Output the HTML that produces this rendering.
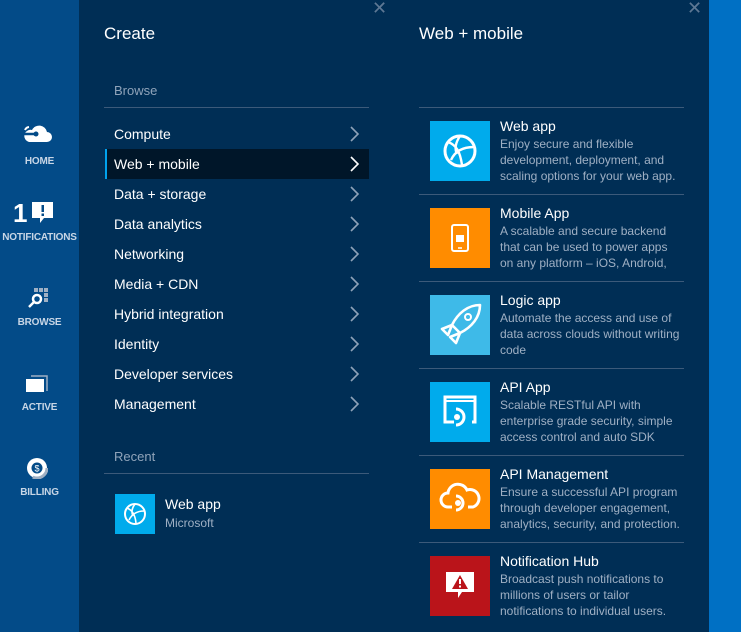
<!DOCTYPE html>
<html><head><meta charset="utf-8"><style>
*{margin:0;padding:0;box-sizing:border-box}
body{width:741px;height:632px;overflow:hidden;background:#002e55;font-family:"Segoe UI","Liberation Sans",sans-serif;position:relative;color:#fff}
.nav{position:absolute;left:0;top:0;width:79px;height:632px;background:#034b88}
.right{position:absolute;left:709px;top:0;width:32px;height:632px;background:#0070c4}
.abs{position:absolute}
.navlbl{position:absolute;width:79px;text-align:center;font-size:10px;color:#c8d6e6;font-weight:bold;letter-spacing:-0.2px}
.h1{font-size:17px;color:#fff}
.sec{font-size:13px;color:#90a4ba}
.sep{position:absolute;height:1px;background:#3c5a7a}
.item{position:absolute;left:105px;width:264px;height:30px;font-size:14px;line-height:30px;padding-left:9px;color:#fff}
.item.sel{background:#001629;border-left:2px solid #00a2ed;padding-left:7px}
.chev{position:absolute;left:243px;top:7px}
.tile{position:absolute;left:430px;width:60px;height:60px}
.tt{position:absolute;left:500px;font-size:14px;color:#fff}
.td{position:absolute;left:500px;font-size:12px;line-height:16px;color:#9fb0c4;width:190px}
.x{position:absolute;color:#5e7894;font-size:18px}
</style></head><body>
<div class="nav"></div>
<div class="right"></div>

<svg class="abs" style="left:21px;top:122px" width="32" height="22" viewBox="0 0 32 22"><path d="M8 20h18a5 5 0 0 0 0-10 8 8 0 0 0-15-2 6 6 0 0 0-3 12z" fill="#fff"/><path d="M2 12h12" stroke="#034b88" stroke-width="2.5"/><circle cx="15" cy="12" r="2.5" fill="#034b88"/><path d="M4 8a5 5 0 0 1 4-3" stroke="#fff" stroke-width="2" fill="none"/></svg>
<div class="navlbl" style="top:156px">HOME</div>
<div class="abs" style="left:13px;top:198px;font-size:26px;font-weight:bold;line-height:30px">1</div>
<svg class="abs" style="left:32px;top:202px" width="22" height="22"><path d="M0 0h21v16H12l-4 5v-5H0z" fill="#fff"/><rect x="9.5" y="3" width="2.5" height="7" fill="#034b88"/><rect x="9.5" y="11.5" width="2.5" height="2.5" fill="#034b88"/></svg>
<div class="navlbl" style="top:232px">NOTIFICATIONS</div>
<svg class="abs" style="left:26px;top:288px" width="22" height="22"><g fill="#9fb0c4"><rect x="8" y="0" width="4" height="4"/><rect x="13" y="0" width="4" height="4"/><rect x="18" y="0" width="4" height="4"/><rect x="18" y="5" width="4" height="4"/><rect x="18" y="10" width="4" height="4"/></g><circle cx="11" cy="11" r="4" stroke="#fff" stroke-width="2.5" fill="none"/><path d="M8 14l-5 5" stroke="#fff" stroke-width="2.5"/></svg>
<div class="navlbl" style="top:317px">BROWSE</div>
<svg class="abs" style="left:26px;top:375px" width="22" height="18"><path d="M5 1h16v15" stroke="#9fb0c4" stroke-width="1.5" fill="none"/><rect x="0" y="4" width="18" height="13" fill="#fff"/></svg>
<div class="navlbl" style="top:402px">ACTIVE</div>
<svg class="abs" style="left:26px;top:457px" width="22" height="22"><circle cx="11" cy="11" r="10" fill="#fff"/><circle cx="11" cy="11" r="10" fill="none" stroke="#9fb0c4" stroke-width="3" stroke-dasharray="20 80"/><circle cx="11" cy="11" r="5.5" fill="#034b88"/><text x="11" y="14.5" font-size="9" text-anchor="middle" fill="#fff" font-family="Liberation Sans">$</text></svg>
<div class="navlbl" style="top:487px">BILLING</div>

<div class="x" style="left:372px;top:-2px">✕</div>
<div class="x" style="left:687px;top:-2px">✕</div>

<div class="abs h1" style="left:104px;top:24px">Create</div>
<div class="abs sec" style="left:114px;top:83px">Browse</div>
<div class="sep" style="left:104px;top:107px;width:265px"></div>
<div class="item" style="top:119px">Compute<svg class="chev" width="12" height="16"><path d="M3 1l7 7-7 7" stroke="#8ea2b8" stroke-width="1.6" fill="none"/></svg></div>
<div class="item sel" style="top:149px">Web + mobile<svg class="chev" style="left:241px" width="12" height="16"><path d="M3 1l7 7-7 7" stroke="#fff" stroke-width="1.6" fill="none"/></svg></div>
<div class="item" style="top:179px">Data + storage<svg class="chev" width="12" height="16"><path d="M3 1l7 7-7 7" stroke="#8ea2b8" stroke-width="1.6" fill="none"/></svg></div>
<div class="item" style="top:209px">Data analytics<svg class="chev" width="12" height="16"><path d="M3 1l7 7-7 7" stroke="#8ea2b8" stroke-width="1.6" fill="none"/></svg></div>
<div class="item" style="top:239px">Networking<svg class="chev" width="12" height="16"><path d="M3 1l7 7-7 7" stroke="#8ea2b8" stroke-width="1.6" fill="none"/></svg></div>
<div class="item" style="top:269px">Media + CDN<svg class="chev" width="12" height="16"><path d="M3 1l7 7-7 7" stroke="#8ea2b8" stroke-width="1.6" fill="none"/></svg></div>
<div class="item" style="top:299px">Hybrid integration<svg class="chev" width="12" height="16"><path d="M3 1l7 7-7 7" stroke="#8ea2b8" stroke-width="1.6" fill="none"/></svg></div>
<div class="item" style="top:329px">Identity<svg class="chev" width="12" height="16"><path d="M3 1l7 7-7 7" stroke="#8ea2b8" stroke-width="1.6" fill="none"/></svg></div>
<div class="item" style="top:359px">Developer services<svg class="chev" width="12" height="16"><path d="M3 1l7 7-7 7" stroke="#8ea2b8" stroke-width="1.6" fill="none"/></svg></div>
<div class="item" style="top:389px">Management<svg class="chev" width="12" height="16"><path d="M3 1l7 7-7 7" stroke="#8ea2b8" stroke-width="1.6" fill="none"/></svg></div>
<div class="abs sec" style="left:114px;top:449px">Recent</div>
<div class="sep" style="left:104px;top:473px;width:265px"></div>
<svg class="abs" style="left:115px;top:494px" width="40" height="40"><rect width="40" height="40" fill="#00abec"/><circle cx="20" cy="20" r="10" stroke="#fff" stroke-width="2" fill="none"/><path d="M12 14c5 2 8 6 9 15M14 26c3-6 8-9 15-9M20 10c-3 4-4 8-2 12" stroke="#fff" stroke-width="1.6" fill="none"/></svg>
<div class="abs" style="left:165px;top:496px;font-size:14px">Web app</div>
<div class="abs" style="left:165px;top:516px;font-size:12px;color:#9fb0c4">Microsoft</div>

<div class="abs h1" style="left:419px;top:24px">Web + mobile</div>
<div class="sep" style="left:419px;top:107px;width:265px"></div>
<div class="sep" style="left:419px;top:194px;width:265px"></div>
<div class="sep" style="left:419px;top:281px;width:265px"></div>
<div class="sep" style="left:419px;top:368px;width:265px"></div>
<div class="sep" style="left:419px;top:455px;width:265px"></div>
<div class="sep" style="left:419px;top:542px;width:265px"></div>

<svg class="tile" style="top:121px" viewBox="0 0 60 60"><rect width="60" height="60" fill="#00abec"/><circle cx="30" cy="30" r="15" stroke="#fff" stroke-width="3" fill="none"/><path d="M18 21c8 3 12 9 14 23M21 39c4-9 12-13 23-13M30 15c-4 6-6 12-3 18" stroke="#fff" stroke-width="2.4" fill="none"/></svg>
<div class="tt" style="top:118px">Web app</div>
<div class="td" style="top:136px">Enjoy secure and flexible<br>development, deployment, and<br>scaling options for your web app.</div>

<svg class="tile" style="top:208px" viewBox="0 0 60 60"><rect width="60" height="60" fill="#ff8c00"/><rect x="22" y="17" width="16" height="26" rx="2" stroke="#fff" stroke-width="2" fill="none"/><rect x="26" y="27" width="8" height="7" fill="#fff"/><path d="M28 40h4" stroke="#fff" stroke-width="1.5"/></svg>
<div class="tt" style="top:205px">Mobile App</div>
<div class="td" style="top:223px">A scalable and secure backend<br>that can be used to power apps<br>on any platform – iOS, Android,</div>

<svg class="tile" style="top:295px" viewBox="0 0 60 60"><rect width="60" height="60" fill="#3ebae8"/><path d="M50 10c-12 0-22 8-28 20l8 8c12-6 20-16 20-28z M22 30l-10 4 6 6zM30 38l-4 10-6-6z" stroke="#fff" stroke-width="2.6" fill="none" stroke-linejoin="round"/><circle cx="38" cy="22" r="3" stroke="#fff" stroke-width="2" fill="none"/></svg>
<div class="tt" style="top:292px">Logic app</div>
<div class="td" style="top:310px">Automate the access and use of<br>data across clouds without writing<br>code</div>

<svg class="tile" style="top:382px" viewBox="0 0 60 60"><rect width="60" height="60" fill="#00abec"/><path d="M24 40h-9V15h30v25h-3" stroke="#fff" stroke-width="3" fill="none"/><path d="M15 19h30" stroke="#fff" stroke-width="2"/><path d="M26 27a8 8 0 1 1 0 16" stroke="#fff" stroke-width="3" fill="none"/><circle cx="27" cy="35" r="3" fill="#fff"/></svg>
<div class="tt" style="top:379px">API App</div>
<div class="td" style="top:397px">Scalable RESTful API with<br>enterprise grade security, simple<br>access control and auto SDK</div>

<svg class="tile" style="top:469px" viewBox="0 0 60 60"><rect width="60" height="60" fill="#ff8c00"/><path d="M22 38h-4a7 7 0 0 1 0-14 10 10 0 0 1 19-3 8 8 0 0 1 6 17h-5" stroke="#fff" stroke-width="3" fill="none"/><path d="M26 27a7 7 0 1 1 0 14" stroke="#fff" stroke-width="3" fill="none"/><circle cx="28" cy="34" r="3" fill="#fff"/></svg>
<div class="tt" style="top:466px">API Management</div>
<div class="td" style="top:484px">Ensure a successful API program<br>through developer engagement,<br>analytics, security, and protection.</div>

<svg class="tile" style="top:556px" viewBox="0 0 60 60"><rect width="60" height="60" fill="#ba141a"/><path d="M16 16h28v20H32l-4 6v-6H16z" fill="#fff"/><path d="M30 19l8 14H22z" fill="#ba141a"/><rect x="29" y="23" width="2" height="5" fill="#fff"/><rect x="29" y="29.5" width="2" height="2" fill="#fff"/></svg>
<div class="tt" style="top:553px">Notification Hub</div>
<div class="td" style="top:571px">Broadcast push notifications to<br>millions of users or tailor<br>notifications to individual users.</div>
</body></html>
